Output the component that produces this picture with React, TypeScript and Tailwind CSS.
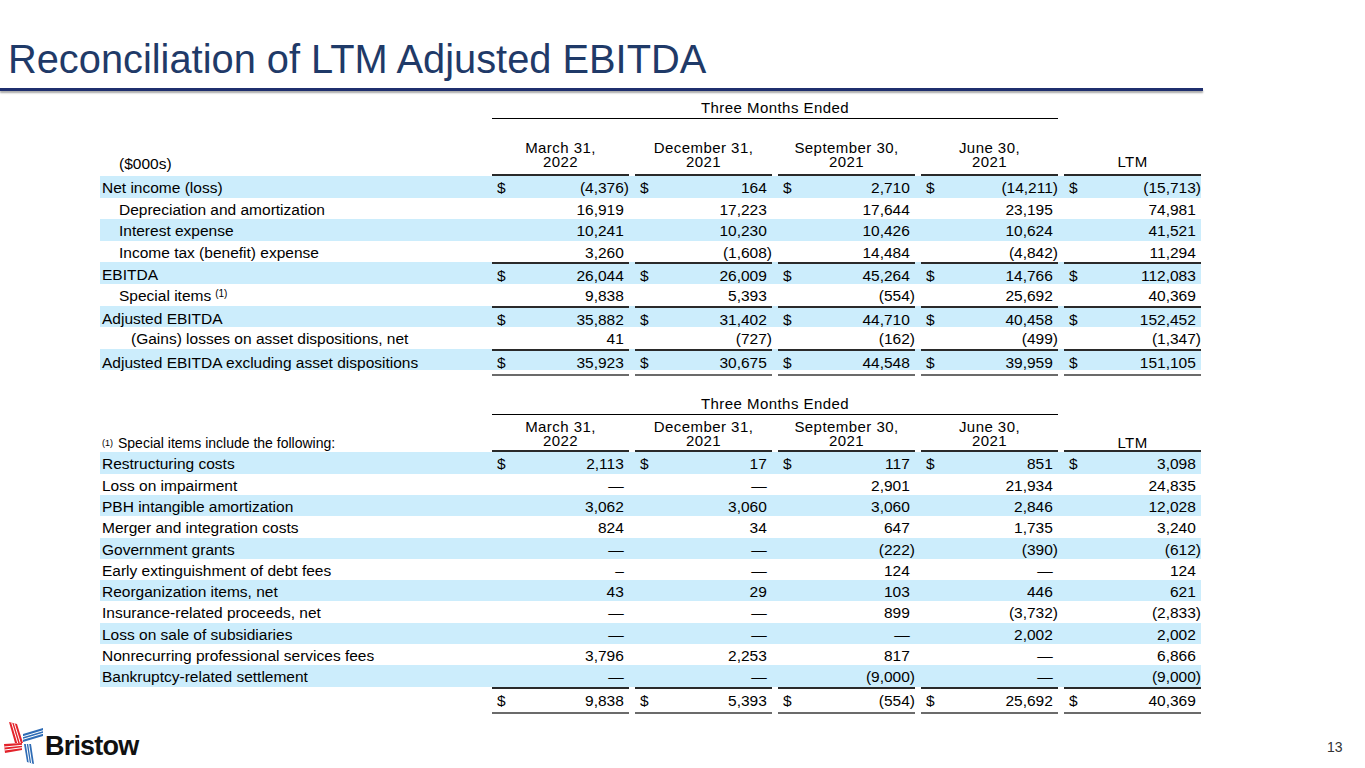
import React from "react";

const SANS = "font-['Liberation_Sans',Arial,sans-serif]";

type Row = {
  label: string;
  indent?: 0 | 1 | 2;
  blue?: boolean;
  dollar?: boolean;
  top?: boolean;
  bottom?: boolean;
  sup?: string;
  vals: string[];
};

const ebitdaRows: Row[] = [
  { label: "Net income (loss)", blue: true, dollar: true, vals: ["(4,376)", "164", "2,710", "(14,211)", "(15,713)"] },
  { label: "Depreciation and amortization", indent: 1, vals: ["16,919", "17,223", "17,644", "23,195", "74,981"] },
  { label: "Interest expense", indent: 1, blue: true, vals: ["10,241", "10,230", "10,426", "10,624", "41,521"] },
  { label: "Income tax (benefit) expense", indent: 1, vals: ["3,260", "(1,608)", "14,484", "(4,842)", "11,294"] },
  { label: "EBITDA", blue: true, dollar: true, top: true, vals: ["26,044", "26,009", "45,264", "14,766", "112,083"] },
  { label: "Special items", sup: "(1)", indent: 1, vals: ["9,838", "5,393", "(554)", "25,692", "40,369"] },
  { label: "Adjusted EBITDA", blue: true, dollar: true, top: true, vals: ["35,882", "31,402", "44,710", "40,458", "152,452"] },
  { label: "(Gains) losses on asset dispositions, net", indent: 2, vals: ["41", "(727)", "(162)", "(499)", "(1,347)"] },
  { label: "Adjusted EBITDA excluding asset dispositions", blue: true, dollar: true, top: true, bottom: true, vals: ["35,923", "30,675", "44,548", "39,959", "151,105"] },
];

const specialRows: Row[] = [
  { label: "Restructuring costs", blue: true, dollar: true, vals: ["2,113", "17", "117", "851", "3,098"] },
  { label: "Loss on impairment", vals: ["—", "—", "2,901", "21,934", "24,835"] },
  { label: "PBH intangible amortization", blue: true, vals: ["3,062", "3,060", "3,060", "2,846", "12,028"] },
  { label: "Merger and integration costs", vals: ["824", "34", "647", "1,735", "3,240"] },
  { label: "Government grants", blue: true, vals: ["—", "—", "(222)", "(390)", "(612)"] },
  { label: "Early extinguishment of debt fees", vals: ["–", "—", "124", "—", "124"] },
  { label: "Reorganization items, net", blue: true, vals: ["43", "29", "103", "446", "621"] },
  { label: "Insurance-related proceeds, net", vals: ["—", "—", "899", "(3,732)", "(2,833)"] },
  { label: "Loss on sale of subsidiaries", blue: true, vals: ["—", "—", "—", "2,002", "2,002"] },
  { label: "Nonrecurring professional services fees", vals: ["3,796", "2,253", "817", "—", "6,866"] },
  { label: "Bankruptcy-related settlement", blue: true, vals: ["—", "—", "(9,000)", "—", "(9,000)"] },
  { label: "", dollar: true, top: true, bottom: true, vals: ["9,838", "5,393", "(554)", "25,692", "40,369"] },
];

const dates: [string, string][] = [
  ["March 31,", "2022"],
  ["December 31,", "2021"],
  ["September 30,", "2021"],
  ["June 30,", "2021"],
];

const GRID = "grid w-[1101px] grid-cols-[386px_repeat(5,137px)] gap-x-[6px]";
const HEAD = "text-[15px] tracking-[0.45px]";

function Value({ v }: { v: string }) {
  const paren = v.endsWith(")");
  return (
    <span className="text-[15.5px]">
      {v}
      {!paren && <span className="invisible">)</span>}
    </span>
  );
}

function DataRow({ row, h }: { row: Row; h: string }) {
  const pad = row.indent === 2 ? "pl-[31px]" : row.indent === 1 ? "pl-[19px]" : "pl-[2px]";
  return (
    <div className={`${GRID} ${h} ${row.blue ? "bg-[#ccedfc]" : ""}`}>
      <div className={`flex items-center ${pad} text-[15.5px] whitespace-nowrap`}>
        {row.label}
        {row.sup && <sup className="ml-[4px] text-[10px] relative top-[-2px]">{row.sup}</sup>}
      </div>
      {row.vals.map((v, i) => (
        <div
          key={i}
          className={`flex items-center justify-between pl-[5px] ${row.top ? "border-t-2 border-[#2a2a2a]" : ""} ${row.bottom ? "border-b-2 border-b-[#6b6b6b]" : ""}`}
        >
          <span className="text-[15.5px]">{row.dollar ? "$" : ""}</span>
          <Value v={v} />
        </div>
      ))}
    </div>
  );
}

function Header({ caption, tall }: { caption: React.ReactNode; tall: boolean }) {
  const pb = tall ? "pb-[5px]" : "pb-[2px]";
  return (
    <>
      <div className={GRID}>
        <div />
        <div className={`col-span-4 h-[21px] flex items-center justify-center border-b border-black ${HEAD} tracking-[0.5px]`}>
          Three Months Ended
        </div>
      </div>
      <div className={`${GRID} ${tall ? "h-[57px]" : "h-[37px]"}`}>
        <div className="flex items-end">{caption}</div>
        {dates.map(([a, b]) => (
          <div
            key={a}
            className={`flex flex-col items-center justify-end ${pb} border-b-2 border-[#2a2a2a] ${HEAD} leading-[14px]`}
          >
            <span>{a}</span>
            <span>{b}</span>
          </div>
        ))}
        <div className={`flex items-end justify-center ${tall ? "pb-[5px]" : "pb-[0px]"} border-b-2 border-[#2a2a2a] ${HEAD} leading-[14px]`}>
          LTM
        </div>
      </div>
    </>
  );
}

function Pinwheel() {
  return (
    <svg width="40" height="42" viewBox="0 0 40 42">
      {/* top red blade */}
      <polygon points="6,0 14,2 20,21 12,21" fill="#e3232b" />
      <line x1="8.7" y1="0.7" x2="14.7" y2="21" stroke="#fff" strokeWidth="1" />
      <line x1="11.3" y1="1.3" x2="17.3" y2="21" stroke="#fff" strokeWidth="1" />
      {/* right blue blade */}
      <polygon points="20,12 40,6 40,14 20,20" fill="#2f6cb5" />
      <line x1="20" y1="14.7" x2="40" y2="8.7" stroke="#fff" strokeWidth="1" />
      <line x1="20" y1="17.3" x2="40" y2="11.3" stroke="#fff" strokeWidth="1" />
      {/* left red blade */}
      <polygon points="1,22 19,21 19,28 2,31" fill="#e3232b" />
      <line x1="1.3" y1="25" x2="19" y2="23.3" stroke="#fff" strokeWidth="1" />
      <line x1="1.7" y1="28" x2="19" y2="25.7" stroke="#fff" strokeWidth="1" />
      {/* bottom blue blade */}
      <polygon points="21,22 28,22 31,42 24,40" fill="#2f6cb5" />
      <line x1="23.3" y1="22" x2="26.3" y2="41" stroke="#fff" strokeWidth="1" />
      <line x1="25.7" y1="22" x2="28.7" y2="41.5" stroke="#fff" strokeWidth="1" />
    </svg>
  );
}

export default function App() {
  return (
    <div className={`relative w-[1365px] h-[768px] overflow-hidden bg-white text-black ${SANS}`}>
      {/* Title */}
      <div className="pt-[40px] pl-[8px] h-[80px]">
        <h1 className="text-[39.8px] leading-none text-[#1f3a68] whitespace-nowrap">Reconciliation of LTM Adjusted EBITDA</h1>
      </div>
      <div className="mt-[8px] w-[1203px] h-[3px] bg-[#1f2f6e] shadow-[0_2px_2px_rgba(0,0,0,0.35)]" />

      {/* EBITDA table */}
      <div className="ml-[100px] mt-[7px]">
        <Header tall caption={<span className="pl-[19px] pb-[5px] text-[15.5px] leading-[14px]">($000s)</span>} />
        {ebitdaRows.map((r, i) => (
          <DataRow key={i} row={r} h="h-[21.6px]" />
        ))}
      </div>

      {/* Special items table */}
      <div className="ml-[100px] mt-[24px]">
        <Header
          tall={false}
          caption={
            <span className="pl-[2px] pb-[1px] text-[14px] leading-[16px] whitespace-nowrap">
              <sup className="text-[9px] relative top-[-2px] mr-[5px]">(1)</sup>
              Special items include the following:
            </span>
          }
        />
        {specialRows.map((r, i) => (
          <DataRow key={i} row={r} h="h-[21.3px]" />
        ))}
      </div>

      {/* Footer */}
      <div className="absolute left-[3px] top-[720px] flex items-center">
        <Pinwheel />
        <span className="ml-[2px] mt-[6px] text-[27px] font-bold tracking-[-0.8px] text-[#111]">Bristow</span>
      </div>
      <div className="absolute left-[1327px] top-[737px] text-[14px] text-[#333]">13</div>
    </div>
  );
}
